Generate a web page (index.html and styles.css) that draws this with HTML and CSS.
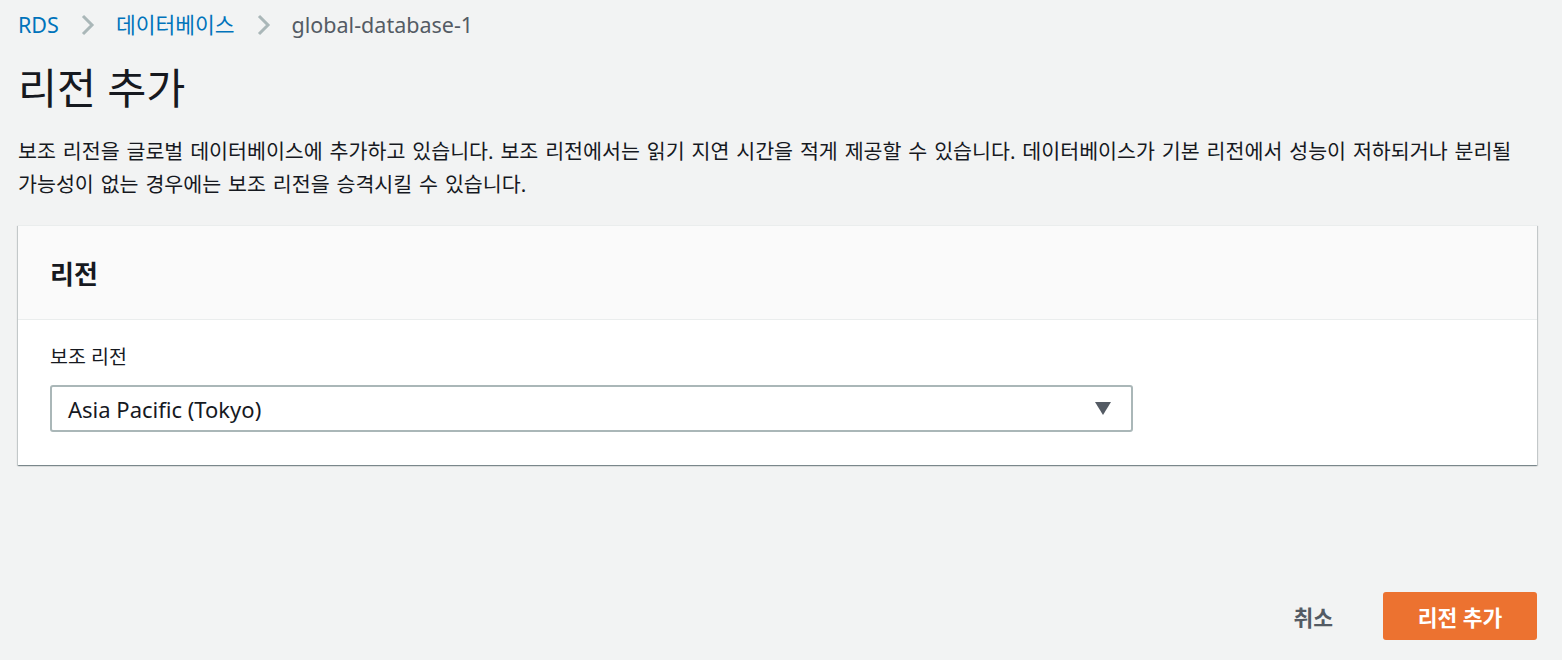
FILE: index.html
```html
<!DOCTYPE html>
<html lang="ko">
<head>
<meta charset="utf-8">
<title>리전 추가</title>
<link rel="stylesheet" href="styles.css">
</head>
<body>
<nav class="breadcrumb">
  <a class="crumb-link" href="#">RDS</a>
  <svg class="chev" width="14" height="22" viewBox="0 0 14 22"><path d="M2 2 L11 11 L2 20" fill="none" stroke="#aab7b8" stroke-width="3"/></svg>
  <a class="crumb-link" href="#">데이터베이스</a>
  <svg class="chev" width="14" height="22" viewBox="0 0 14 22"><path d="M2 2 L11 11 L2 20" fill="none" stroke="#aab7b8" stroke-width="3"/></svg>
  <span class="crumb-current">global-database-1</span>
</nav>
<h1 class="title">리전 추가</h1>
<p class="desc">보조 리전을 글로벌 데이터베이스에 추가하고 있습니다. 보조 리전에서는 읽기 지연 시간을 적게 제공할 수 있습니다. 데이터베이스가 기본 리전에서 성능이 저하되거나 분리될 가능성이 없는 경우에는 보조 리전을 승격시킬 수 있습니다.</p>
<section class="panel">
  <header class="panel-head"><h2>리전</h2></header>
  <div class="panel-body">
    <label class="field-label">보조 리전</label>
    <div class="select">
      <span class="select-value">Asia Pacific (Tokyo)</span>
      <svg class="caret" width="16" height="13" viewBox="0 0 16 13"><path d="M0 0 H16 L8 13 Z" fill="#545b64"/></svg>
    </div>
  </div>
</section>
<div class="actions">
  <button class="btn-link">취소</button>
  <button class="btn-primary">리전 추가</button>
</div>
</body>
</html>
```
FILE: styles.css
```css
html, body {
  margin: 0;
  padding: 0;
}
body {
  background: #f2f3f3;
  color: #16191f;
  font-family: "Noto Sans", "Noto Sans CJK KR", sans-serif;
  padding: 10px 25px 0 18px;
  word-break: keep-all;
}
.breadcrumb {
  display: flex;
  align-items: center;
  height: 30px;
  font-size: 21.5px;
  line-height: 30px;
}
.crumb-link {
  color: #0073bb;
  text-decoration: none;
}
.chev {
  margin: 0 21px 0 22px;
}
.crumb-current {
  color: #545b64;
}
.title {
  margin: 23px 0 0;
  font-size: 42.5px;
  font-weight: 400;
  line-height: 50px;
}
.desc {
  margin: 22px 0 0;
  font-size: 20.6px;
  line-height: 33px;
  word-spacing: 1.5px;
  color: #16191f;
}
.panel {
  margin-top: 24px;
  background: #fff;
  border-top: 1px solid #eaeded;
  box-shadow: 0 1px 1px 0 rgba(0, 28, 36, 0.3), 1px 1px 1px 0 rgba(0, 28, 36, 0.15), -1px 1px 1px 0 rgba(0, 28, 36, 0.15);
}
.panel-head {
  background: #fafafa;
  border-bottom: 1px solid #eaeded;
  height: 93px;
  display: flex;
  align-items: center;
  padding: 0 32px;
}
.panel-head h2 {
  margin: 0;
  font-size: 26px;
  font-weight: 700;
}
.panel-body {
  padding: 24px 32px 33px;
}
.field-label {
  display: block;
  font-size: 19.5px;
  line-height: 26px;
  margin-bottom: 15px;
}
.select {
  width: 1083px;
  height: 47px;
  box-sizing: border-box;
  border: 2px solid #aab7b8;
  border-radius: 3px;
  display: flex;
  align-items: center;
  justify-content: space-between;
  padding: 0 20px 0 16px;
}
.select-value {
  font-size: 22px;
}
.actions {
  margin-top: 127px;
  display: flex;
  justify-content: flex-end;
  align-items: center;
  gap: 30px;
}
.btn-link {
  background: none;
  border: none;
  font-family: inherit;
  font-size: 21.5px;
  font-weight: 700;
  color: #545b64;
  padding: 0 20px;
  height: 48px;
}
.btn-primary {
  font-family: inherit;
  background: #ec7230;
  color: #fff;
  border: none;
  border-radius: 3px;
  font-size: 21.5px;
  font-weight: 700;
  width: 154px;
  height: 48px;
}
```
